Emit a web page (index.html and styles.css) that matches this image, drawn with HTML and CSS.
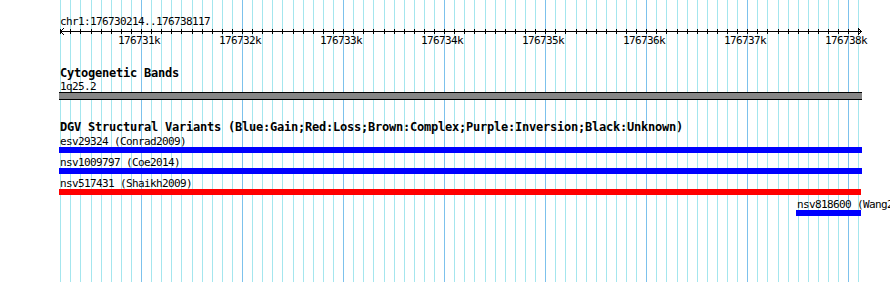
FILE: index.html
```html
<!DOCTYPE html>
<html lang="en">
<head>
    <meta charset="UTF-8">
    <title>chr1:176730214..176738117</title>
    <link rel="stylesheet" href="styles.css">
</head>
<body>
    <div class="browser">
        <svg class="grid" id="grid" width="890" height="282"></svg>

        <div class="ruler">
            <div class="chrom-label">chr1:176730214..176738117</div>
            <svg class="axis" id="axis" width="890" height="7"></svg>
            <div class="tick-labels" id="tick-labels"></div>
        </div>

        <div class="track cyto">
            <div class="track-title">Cytogenetic Bands</div>
            <div class="band-label">1q25.2</div>
            <div class="band"></div>
        </div>

        <div class="track dgv">
            <div class="track-title dgv-title">DGV Structural Variants (Blue:Gain;Red:Loss;Brown:Complex;Purple:Inversion;Black:Unknown)</div>

            <div class="variant" style="margin-left: 59px">
                <div class="variant-label">esv29324 (Conrad2009)</div>
                <div class="variant-bar gain" style="width: 803px"></div>
            </div>
            <div class="variant" style="margin-left: 59px">
                <div class="variant-label">nsv1009797 (Coe2014)</div>
                <div class="variant-bar gain" style="width: 803px"></div>
            </div>
            <div class="variant" style="margin-left: 59px">
                <div class="variant-label">nsv517431 (Shaikh2009)</div>
                <div class="variant-bar loss" style="width: 802px"></div>
            </div>
            <div class="variant" style="margin-left: 796px">
                <div class="variant-label">nsv818600 (Wang2010)</div>
                <div class="variant-bar gain" style="width: 65px"></div>
            </div>
        </div>
    </div>

    <script>
        const svgNS = 'http://www.w3.org/2000/svg';
        const grid = document.getElementById('grid');
        const axis = document.getElementById('axis');
        const tickLabels = document.getElementById('tick-labels');

        function rect(parent, x, y, w, h, cls) {
            const r = document.createElementNS(svgNS, 'rect');
            r.setAttribute('x', x);
            r.setAttribute('y', y);
            r.setAttribute('width', w);
            r.setAttribute('height', h);
            r.setAttribute('class', cls);
            parent.appendChild(r);
        }

        // gridlines + ticks every 100bp, first one at 176730200
        for (let k = 0; k < 80; k++) {
            const x = Math.round(60.2 + 10.104 * k);
            const major = k % 10 === 8;
            rect(grid, x, 0, 1, 282, major ? 'line-major' : 'line-minor');
            rect(axis, x, 1, 1, 5, 'ink');

            if (major) {
                const label = document.createElement('div');
                label.className = 'tick';
                label.style.left = (x - 23) + 'px';
                label.textContent = (176731 + (k - 8) / 10) + 'k';
                tickLabels.appendChild(label);
            }
        }

        // axis line with arrow heads
        rect(axis, 60, 3, 802, 1, 'ink');
        [[61, 2], [62, 1], [63, 0], [61, 4], [62, 5], [63, 6],
         [860, 2], [859, 1], [858, 0], [860, 4], [859, 5], [858, 6]].forEach(p => {
            rect(axis, p[0], p[1], 1, 1, 'ink');
        });
    </script>
</body>
</html>
```

FILE: styles.css
```css
body {
    margin: 0;
    background: #fff;
    color: #000;
    font-family: "DejaVu Sans Mono", "Liberation Mono", monospace;
    font-size: 11px;
    letter-spacing: -0.62px;
    overflow: hidden;
}
.browser {
    position: relative;
    width: 890px;
    height: 282px;
    overflow: hidden;
}
.grid {
    position: absolute;
    top: 0;
    left: 0;
    shape-rendering: crispEdges;
}
.line-minor {
    fill: #a4e6ee;
}
.line-major {
    fill: #7cc2ec;
}
.ink {
    fill: #000;
}
.ruler,
.track {
    position: relative;
}
.chrom-label {
    margin: 15px 0 0 60px;
    height: 13px;
    line-height: 13px;
    white-space: nowrap;
}
.axis {
    display: block;
    shape-rendering: crispEdges;
}
.tick-labels {
    position: relative;
    margin-top: -1px;
    height: 13px;
    line-height: 13px;
}
.tick {
    position: absolute;
    top: 0;
    white-space: nowrap;
}
.cyto {
    margin-top: 20px;
}
.track-title {
    margin-left: 60px;
    height: 13px;
    line-height: 13px;
    font-size: 12px;
    font-weight: bold;
    letter-spacing: -0.224px;
    white-space: nowrap;
}
.band-label {
    margin-left: 60px;
    height: 12px;
    line-height: 13px;
}
.band {
    margin-left: 59px;
    width: 803px;
    height: 6px;
    background: #868686;
    border-top: 1px solid #000;
    border-bottom: 1px solid #000;
}
.dgv {
    margin-top: 21px;
}
.dgv-title {
    height: 14px;
}
.variant-label {
    height: 12px;
    line-height: 13px;
    padding-left: 1px;
    white-space: nowrap;
}
.variant-bar {
    height: 6px;
    margin-bottom: 3px;
}
.gain {
    background: #0000ff;
}
.loss {
    background: #ff0000;
}
```
